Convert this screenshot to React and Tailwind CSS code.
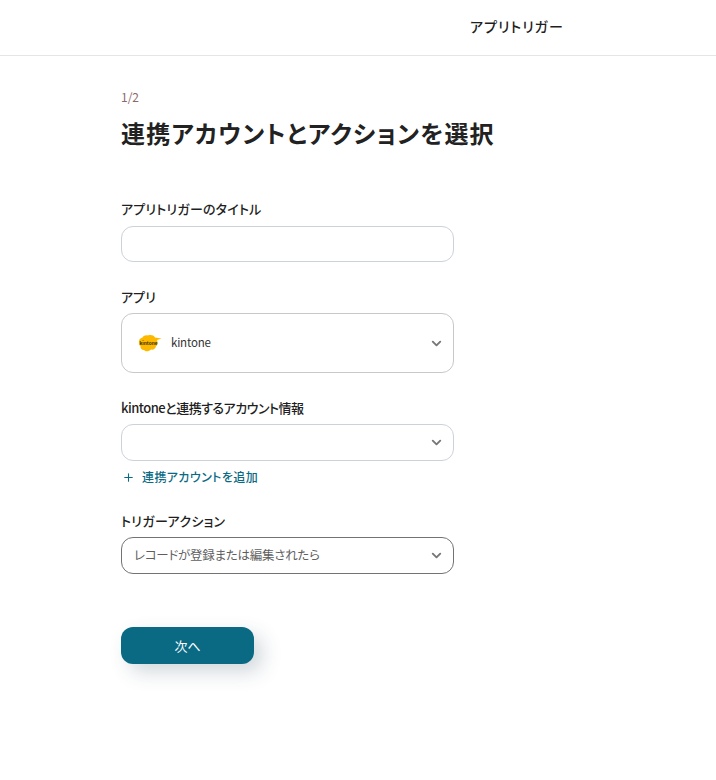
import { ChevronDown, Plus } from "lucide-react";

const font = "font-['Noto_Sans_CJK_JP','Noto_Sans',sans-serif] [font-feature-settings:'palt']";

function Label({ children, className }) {
  return <p className={`mb-[6px] h-[20px] whitespace-nowrap text-[13px] leading-[20px] font-medium text-[#1f1f1f] ${className}`}>{children}</p>;
}

function SelectBox({ children, className }) {
  return (
    <div className={`flex items-center justify-between rounded-[12px] border bg-white pr-[9px] ${className}`}>
      {children}
      <ChevronDown className="w-[15px] h-[15px] text-[#777777]" strokeWidth={3} />
    </div>
  );
}

function KintoneLogo() {
  return (
    <svg width="24" height="18" viewBox="0 0 24 18">
      <path
        d="M1 9C0.500 6 2 4 4.500 3.500C5.500 1.500 8 1 10 1.500C12.500 0.500 15.500 1 17 3.500L23.500 4.500L19 6C20 8 19.500 11 18 12.500C17.500 15 15 16 13 15.500C11 17.500 7.500 18 6 16C3.500 16 2 14 2.500 12C1.500 11.500 1 10.500 1 9Z"
        fill="#fdb900"
      />
      <text x="10.500" y="10.500" textAnchor="middle" fontSize="4.800" fontWeight="700" fill="#3a3000">
        kintone
      </text>
    </svg>
  );
}

export default function App() {
  return (
    <div className={`min-h-[780px] bg-white text-[#1f1f1f] ${font}`}>
      <header className="flex h-[56px] items-center border-b border-[#e5e5e5] pl-[470px]">
        <span className="-translate-y-px text-[14px] font-medium tracking-[1px] text-[#1f1f1f]">アプリトリガー</span>
      </header>

      <main className="w-[454px] pl-[121px]">
        <p className="mt-[32px] text-[12px] leading-[18px] text-[#8c6a6a]">1/2</p>
        <h1 className="mt-[9px] h-[36px] whitespace-nowrap text-[24px] leading-[36px] font-bold tracking-[1.2px] text-[#222222]">
          連携アカウントとアクションを選択
        </h1>

        <div className="mt-[48px]">
          <Label className="mb-[7px] tracking-[0.2px]">アプリトリガーのタイトル</Label>
          <div className="h-[36px] rounded-[12px] border border-[#ccd2da] bg-white" />
        </div>

        <div className="mt-[25px]">
          <Label>アプリ</Label>
          <SelectBox className="h-[60px] border-[#c8c8c8]">
            <div className="flex items-center gap-[9px] pl-[16px]">
              <KintoneLogo />
              <span className="text-[11.500px] tracking-[-0.2px] text-[#333333]">kintone</span>
            </div>
          </SelectBox>
        </div>

        <div className="mt-[25px]">
          <Label className="tracking-[-0.5px]">kintoneと連携するアカウント情報</Label>
          <SelectBox className="h-[37px] border-[#ccd2da]">
            <span />
          </SelectBox>
          <div className="mt-[7px] flex h-[18px] items-center gap-[7px] pl-[1px] text-[12px] font-medium tracking-[0.4px] text-[#0a6a84]">
            <Plus className="w-[13px] h-[13px]" strokeWidth={2} />
            <span>連携アカウントを追加</span>
          </div>
        </div>

        <div className="mt-[25px]">
          <Label className="tracking-[0.3px]">トリガーアクション</Label>
          <SelectBox className="h-[37px] border-[#737373]">
            <span className="pl-[12px] text-[12.500px] tracking-[-0.25px] text-[#5f5f5f]">レコードが登録または編集されたら</span>
          </SelectBox>
        </div>

        <button className="mt-[53px] flex h-[37px] w-[133px] items-center justify-center rounded-[12px] bg-[#0a6a84] text-[13px] text-white shadow-[8px_8px_20px_rgba(30,60,80,0.2)]">
          次へ
        </button>
      </main>
    </div>
  );
}
